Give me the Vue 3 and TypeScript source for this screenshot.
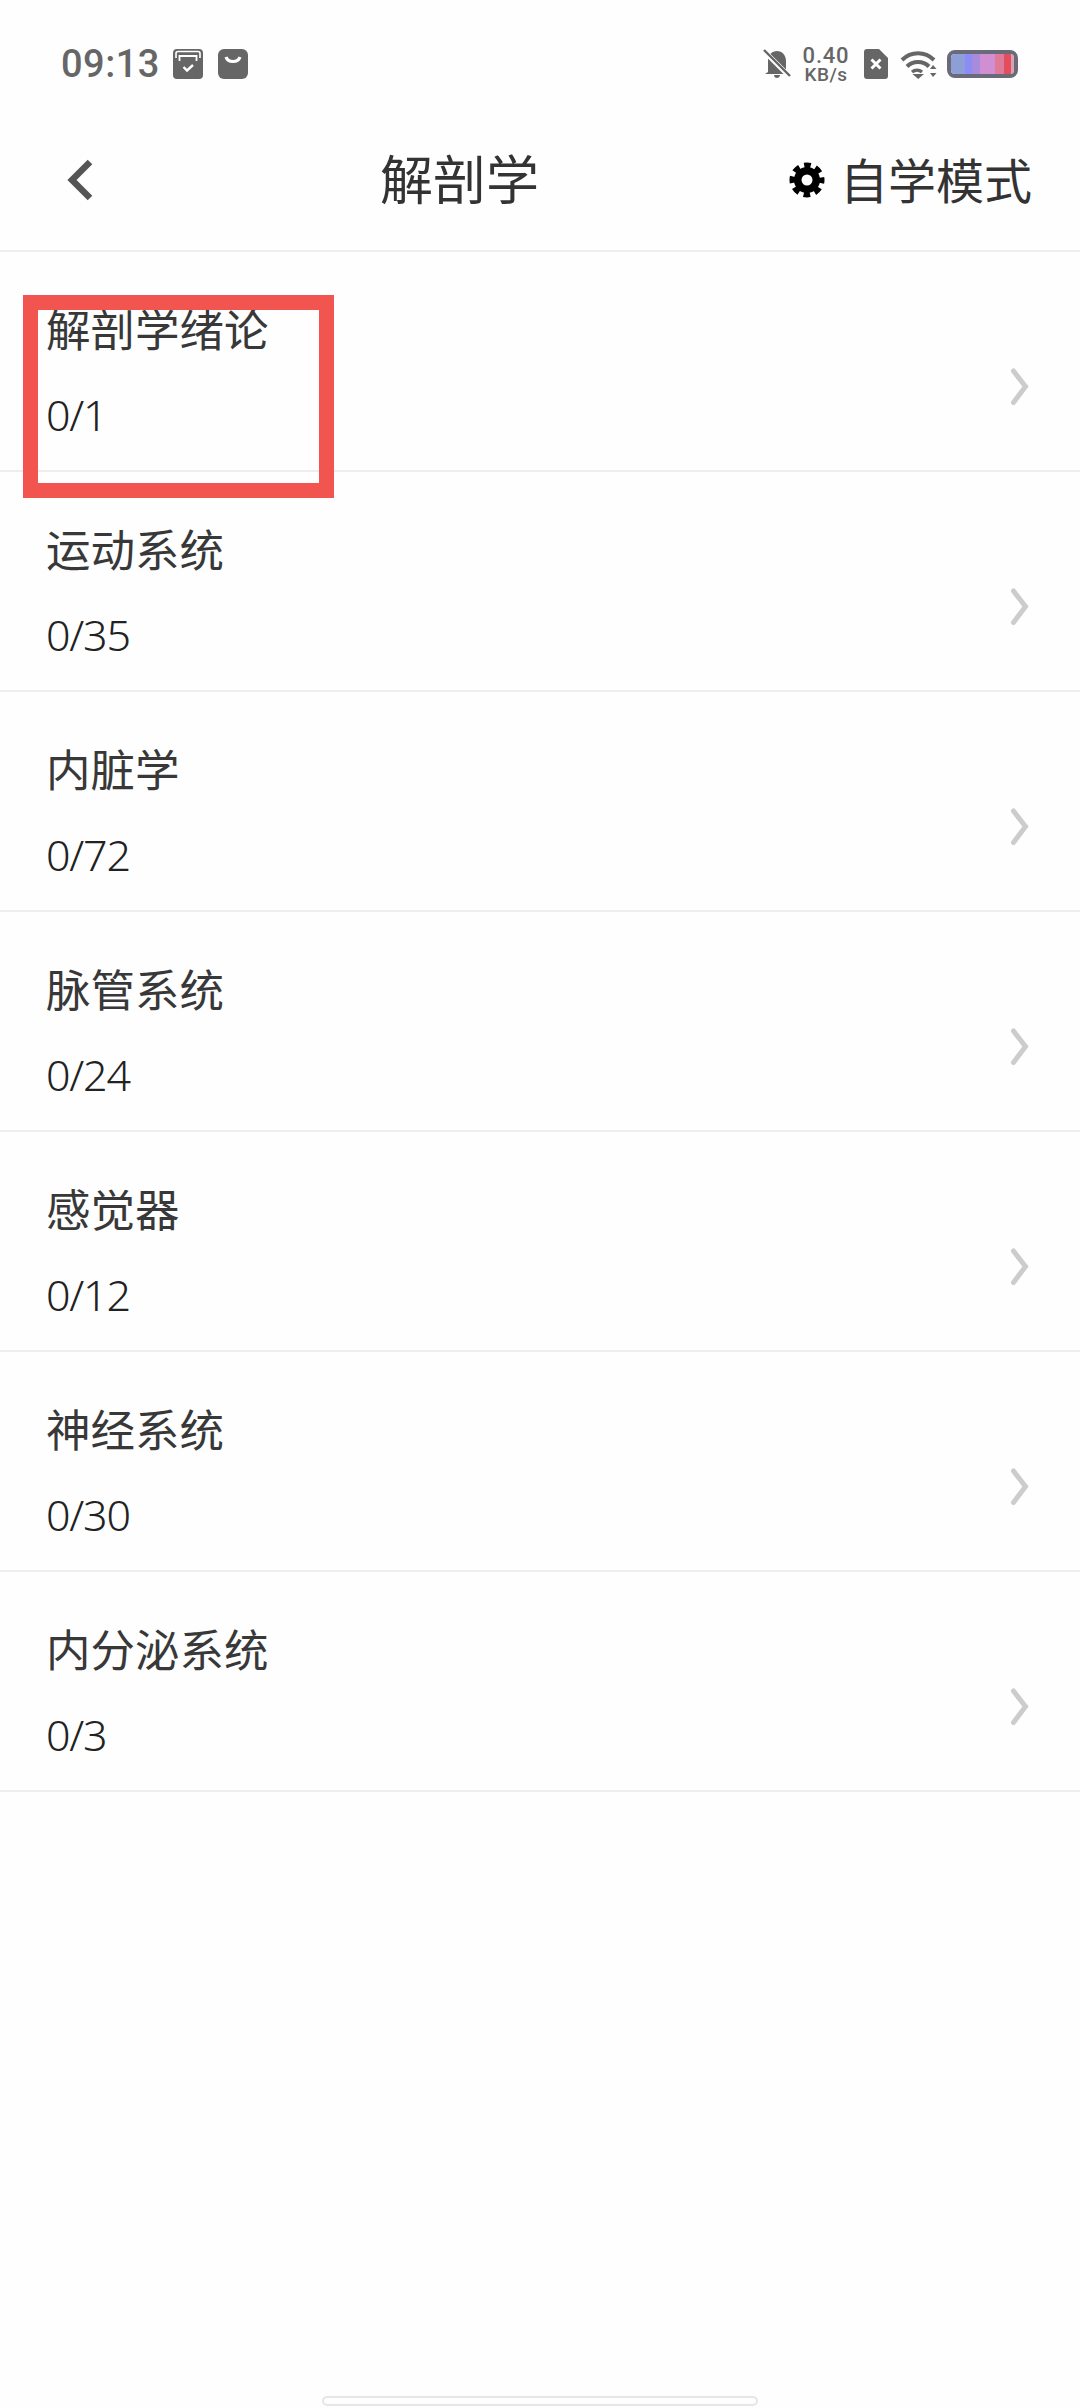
<template>
  <div class="page">
    <div class="status-bar">
      <div class="status-left">
        <span class="time">09:13</span>
        <svg class="app-icon" viewBox="0 0 30 30">
          <rect width="30" height="30" rx="4" fill="#666" />
          <path d="M3 9V4.500Q3 2.500 5 2.500H25Q27 2.500 27 4.500V9" fill="none" stroke="#fff" stroke-width="1.600" />
          <path d="M6.500 12V7H23.500V12" fill="none" stroke="#fff" stroke-width="1.800" />
          <path d="M10.500 18L14 21.500L20 16" fill="none" stroke="#fff" stroke-width="2.400" />
        </svg>
        <svg class="app-icon" viewBox="0 0 30 30">
          <rect width="30" height="30" rx="6" fill="#666" />
          <path d="M8 8C10 14 20 14 22 8" fill="none" stroke="#fff" stroke-width="3.200" />
        </svg>
      </div>
      <div class="status-right">
        <svg class="bell" viewBox="0 0 28 30">
          <path d="M5 23V12C5 6 9 2 14 2C19 2 23 6 23 12V23L26 25H2ZM11 26H17C17 30 11 30 11 26Z" fill="#666" />
          <path d="M1 2L27 28" stroke="#fff" stroke-width="5" />
          <path d="M1 1L27 27" stroke="#666" stroke-width="2.400" />
        </svg>
        <div class="speed">
          <span class="speed-num">0.40</span>
          <span class="speed-unit">KB/s</span>
        </div>
        <svg class="sim" viewBox="0 0 24 30">
          <path d="M3 0H15L24 9V27Q24 30 21 30H3Q0 30 0 27V3Q0 0 3 0Z" fill="#666" />
          <path d="M7.500 10.500L16.500 19.500M16.500 10.500L7.500 19.500" stroke="#fff" stroke-width="3" />
        </svg>
        <svg class="wifi" viewBox="0 0 37 30">
          <path d="M2 11C11 2 25 2 34 11" fill="none" stroke="#666" stroke-width="4" />
          <path d="M7 17.500C13 11.500 23 11.500 29 17.500" fill="none" stroke="#666" stroke-width="4" />
          <path d="M12 23C15 20.500 19 20.500 22 23" fill="none" stroke="#666" stroke-width="3.400" />
          <path d="M12.500 25H24L18.200 30Z" fill="#666" />
          <path d="M30 20L33 16L36.500 20ZM30 24H36.500L33 28Z" fill="#666" />
        </svg>
        <div class="battery"><div class="battery-fill"></div></div>
      </div>
    </div>

    <div class="header">
      <div class="back">
        <svg width="26" height="42" viewBox="0 0 26 42">
          <path d="M23 3L5 21L23 39" fill="none" stroke="#555" stroke-width="6.500" />
        </svg>
      </div>
      <div class="title">解剖学</div>
      <div class="mode">
        <svg class="gear" viewBox="0 0 36 36">
          <circle cx="18" cy="18" r="13" fill="#000" />
          <circle cx="18" cy="18" r="14.500" fill="none" stroke="#000" stroke-width="6" stroke-dasharray="6.500 4.890" stroke-dashoffset="3.250" />
          <circle cx="18" cy="18" r="5.500" fill="#fefefe" />
        </svg>
        <span>自学模式</span>
      </div>
    </div>

    <div class="list">
      <div v-for="(item, i) in chapters" :key="item.name" class="row">
        <div class="row-text">
          <div class="row-name">{{ item.name }}</div>
          <div class="row-count">0/{{ item.total }}</div>
        </div>
        <svg class="arrow" width="24" height="42" viewBox="0 0 24 42">
          <path d="M5.500 7L17.500 22.500L5.500 38.500" fill="none" stroke="#ccc" stroke-width="5" stroke-linecap="round" />
        </svg>
        <div v-if="i === 0" class="mark"></div>
      </div>
    </div>

    <div class="home-bar"></div>
  </div>
</template>

<script setup lang="ts">
interface Chapter {
  name: string
  total: number
}

const chapters: Chapter[] = [
  { name: '解剖学绪论', total: 1 },
  { name: '运动系统', total: 35 },
  { name: '内脏学', total: 72 },
  { name: '脉管系统', total: 24 },
  { name: '感觉器', total: 12 },
  { name: '神经系统', total: 30 },
  { name: '内分泌系统', total: 3 },
]
</script>

<style>
html,
body {
  margin: 0;
  background: #fefefe;
}
</style>

<style scoped>
.page {
  width: 1080px;
  height: 2408px;
  position: relative;
  overflow: hidden;
  background: #fefefe;
  color: #333;
  font-family: "Noto Sans", "Noto Sans CJK SC", sans-serif;
}
.status-bar {
  height: 100px;
  padding: 49px 62px 0 61px;
  box-sizing: border-box;
  display: flex;
  justify-content: space-between;
  align-items: flex-start;
}
.status-left,
.status-right {
  display: flex;
  align-items: center;
  height: 30px;
}
.time {
  font-family: Roboto, sans-serif;
  font-size: 38px;
  font-weight: 500;
  color: #666;
  letter-spacing: 0.5px;
  width: 112px;
}
.app-icon {
  width: 30px;
  height: 30px;
  margin-right: 15px;
}
.bell {
  width: 28px;
  height: 30px;
}
.speed {
  width: 50px;
  margin-left: 10px;
  display: flex;
  flex-direction: column;
  align-items: center;
  font-family: Roboto, sans-serif;
  font-weight: 500;
  color: #666;
}
.speed-num {
  font-size: 22px;
  line-height: 18px;
  letter-spacing: 0.8px;
}
.speed-unit {
  font-size: 19px;
  line-height: 15px;
  margin-top: 2px;
  letter-spacing: 0.4px;
}
.sim {
  width: 24px;
  height: 30px;
  margin-left: 13px;
}
.wifi {
  width: 37px;
  height: 30px;
  margin-left: 12px;
}
.battery {
  width: 71px;
  height: 28px;
  margin-left: 10px;
  box-sizing: border-box;
  border: 4px solid #6a6a78;
  border-radius: 8px;
  overflow: hidden;
}
.battery-fill {
  height: 100%;
  background: linear-gradient(
    90deg,
    #8e9fd6 0 22%,
    #8b8cf5 22% 34%,
    #a98bdc 34% 46%,
    #cf8fd2 46% 70%,
    #e07a9a 70% 84%,
    #e24e5e 84% 95%,
    #d9a0b0 95%
  );
}
.header {
  height: 152px;
  box-sizing: border-box;
  display: flex;
  align-items: center;
  padding: 5px 48px 0 0;
  border-bottom: 2px solid #eee;
}
.back {
  width: 130px;
  padding: 5px 0 0 67px;
  box-sizing: border-box;
  display: flex;
  align-items: center;
}
.title {
  flex: 1;
  text-align: center;
  font-size: 53px;
  color: #333;
}
.mode {
  display: flex;
  align-items: center;
  font-size: 48px;
  color: #333;
}
.gear {
  width: 36px;
  height: 36px;
  margin: 5px 15px 0 0;
}
.row {
  position: relative;
  height: 220px;
  box-sizing: border-box;
  padding: 48px 48px 0 46px;
  display: flex;
  justify-content: space-between;
  border-bottom: 2px solid #eee;
}
.row-name {
  font-size: 44.5px;
  line-height: 60px;
  color: #383838;
}
.row-count {
  font-size: 43px;
  font-weight: 300;
  letter-spacing: -1.2px;
  line-height: 60px;
  margin-top: 25px;
  color: #222;
}
.arrow {
  margin-top: 64px;
}
.mark {
  position: absolute;
  left: 23px;
  top: 43px;
  width: 311px;
  height: 203px;
  box-sizing: border-box;
  border: 15px solid #f2554f;
}
.home-bar {
  position: absolute;
  left: 322px;
  top: 2396px;
  width: 436px;
  height: 10px;
  box-sizing: border-box;
  border: 2px solid #e6e6e6;
  border-radius: 5px;
}
</style>
